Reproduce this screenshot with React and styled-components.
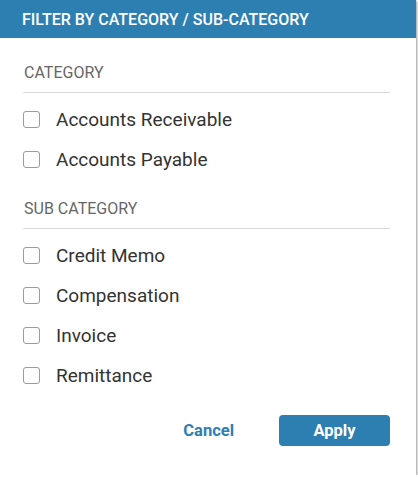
import React, { useState } from "react";
import styled, { createGlobalStyle } from "styled-components";

const GlobalStyle = createGlobalStyle`
  html, body {
    margin: 0;
    padding: 0;
    background: #ffffff;
    font-family: Roboto, "Liberation Sans", Arial, sans-serif;
  }
`;

const Panel = styled.div`
  width: 416px;
  height: 475px;
  background: #fff;
  box-shadow: 1px 1px 2px rgba(0, 0, 0, 0.4);
  display: flex;
  flex-direction: column;
`;

const Header = styled.div`
  height: 38px;
  background: #2d7fb2;
  color: #fff;
  display: flex;
  align-items: center;
  padding: 0 22px;
  font-size: 16px;
  font-weight: 500;
`;

const Body = styled.div`
  padding: 19px 26px 0 23px;
  display: flex;
  flex-direction: column;
`;

const SectionTitle = styled.div`
  font-size: 16px;
  line-height: 19px;
  color: #666;
  padding: 6px 0 10px 1px;
  border-bottom: 1px solid #d8d8d8;
  margin-bottom: 6px;
`;

const Row = styled.label`
  display: flex;
  align-items: center;
  height: 40px;
  font-size: 19px;
  color: #333;
  cursor: pointer;
`;

const Box = styled.span`
  width: 15px;
  height: 15px;
  border: 1.5px solid #9a9a9a;
  border-radius: 3px;
  margin-right: 16px;
  background: ${(p) => (p.checked ? "#2d7fb2" : "#fff")};
`;

const Section = styled.div`
  margin-bottom: ${(p) => p.gap || 0}px;
`;

const Footer = styled.div`
  display: flex;
  justify-content: flex-end;
  align-items: center;
  gap: 39px;
  padding: 20px 26px 0 0;
`;

const CancelButton = styled.button`
  background: none;
  border: none;
  color: #2d7fb2;
  font-family: inherit;
  font-size: 16.5px;
  font-weight: 700;
  cursor: pointer;
`;

const ApplyButton = styled.button`
  width: 111px;
  height: 31px;
  background: #2d7fb2;
  color: #fff;
  border: none;
  border-radius: 4px;
  font-family: inherit;
  font-size: 16.5px;
  font-weight: 700;
  cursor: pointer;
`;

const categories = ["Accounts Receivable", "Accounts Payable"];
const subCategories = ["Credit Memo", "Compensation", "Invoice", "Remittance"];

const CheckRow = ({ label, checked, onToggle }) => (
  <Row onClick={onToggle}>
    <Box checked={checked} />
    {label}
  </Row>
);

const App = () => {
  const [selected, setSelected] = useState({});
  const toggle = (name) => setSelected((prev) => ({ ...prev, [name]: !prev[name] }));

  return (
    <>
      <GlobalStyle />
      <Panel>
        <Header>FILTER BY CATEGORY / SUB-CATEGORY</Header>
        <Body>
          <Section gap={14}>
            <SectionTitle>CATEGORY</SectionTitle>
            {categories.map((c) => (
              <CheckRow key={c} label={c} checked={!!selected[c]} onToggle={() => toggle(c)} />
            ))}
          </Section>
          <Section>
            <SectionTitle>SUB CATEGORY</SectionTitle>
            {subCategories.map((c) => (
              <CheckRow key={c} label={c} checked={!!selected[c]} onToggle={() => toggle(c)} />
            ))}
          </Section>
        </Body>
        <Footer>
          <CancelButton>Cancel</CancelButton>
          <ApplyButton>Apply</ApplyButton>
        </Footer>
      </Panel>
    </>
  );
};

export default App;
